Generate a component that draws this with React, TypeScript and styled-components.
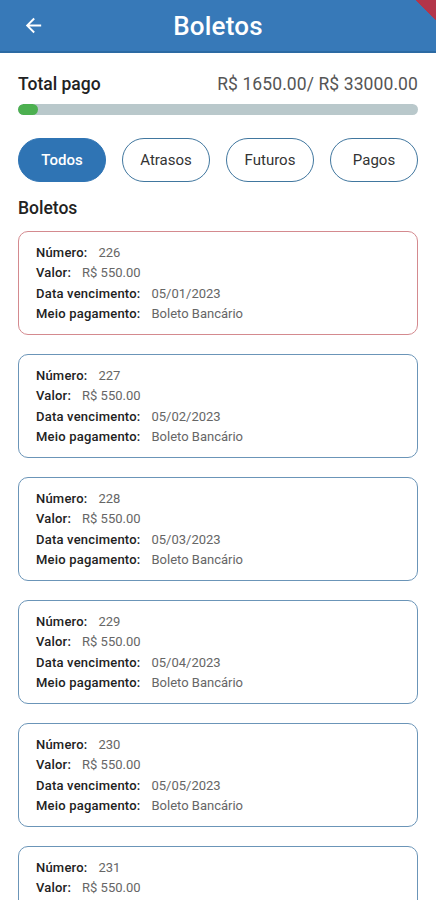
import styled, { createGlobalStyle } from "styled-components";

const GlobalStyle = createGlobalStyle`
    html, body {
        margin: 0;
        padding: 0;
        background: #ffffff;
        font-family: Roboto, "Noto Sans", sans-serif;
    }
    * {
        box-sizing: border-box;
    }
`;

const Screen = styled.div`
    width: 436px;
    height: 900px;
    overflow: hidden;
    position: relative;
    background: #ffffff;
`;

const AppBar = styled.header`
    height: 53px;
    background: #3779b8;
    border-bottom: 2px solid #2c6aa3;
    display: flex;
    align-items: center;
    justify-content: center;
    position: relative;
    color: #ffffff;
`;

const BackButton = styled.button`
    position: absolute;
    left: 20px;
    top: 12px;
    width: 26px;
    height: 26px;
    padding: 0;
    border: none;
    background: transparent;
    display: flex;
    align-items: center;
    justify-content: center;
`;

const AppTitle = styled.h1`
    margin: 0;
    font-size: 26px;
    font-weight: 500;
    letter-spacing: 0.2px;
`;

const DebugBanner = styled.div`
    position: absolute;
    top: 0;
    right: 0;
    width: 20px;
    height: 20px;
    background: linear-gradient(45deg, transparent 50%, #b3354a 50%);
`;

const Content = styled.main`
    padding: 19px 18px 0;
    display: flex;
    flex-direction: column;
`;

const TotalRow = styled.div`
    display: flex;
    justify-content: space-between;
    align-items: center;
    height: 24px;
`;

const TotalLabel = styled.span`
    font-size: 17.5px;
    font-weight: 500;
    color: #222222;
`;

const TotalValue = styled.span`
    font-size: 17.5px;
    letter-spacing: 0.1px;
    color: #555555;
`;

const ProgressTrack = styled.div`
    margin-top: 8px;
    height: 11px;
    border-radius: 6px;
    background: #b9c8cb;
    overflow: hidden;
`;

const ProgressFill = styled.div`
    height: 100%;
    border-radius: 6px;
    background: #4cb050;
`;

const FilterRow = styled.div`
    margin-top: 23px;
    display: grid;
    grid-template-columns: repeat(4, 1fr);
    gap: 16px;
`;

const FilterChip = styled.button<{ active: boolean }>`
    height: 44px;
    border-radius: 22px;
    border: 1px solid ${(props) => (props.active ? "#2f74b4" : "#41779f")};
    background: ${(props) => (props.active ? "#2f74b4" : "#ffffff")};
    color: ${(props) => (props.active ? "#ffffff" : "#333333")};
    font-family: Roboto, sans-serif;
    font-size: 15px;
    font-weight: ${(props) => (props.active ? 500 : 400)};
    padding: 0;
`;

const SectionTitle = styled.h2`
    margin: 14px 0 0;
    font-size: 17.5px;
    font-weight: 500;
    color: #222222;
    line-height: 24px;
`;

const CardList = styled.div`
    margin-top: 11px;
    display: flex;
    flex-direction: column;
    gap: 19px;
`;

const Card = styled.div<{ late: boolean }>`
    height: 104px;
    border: 1px solid ${(props) => (props.late ? "#d48a8f" : "#6b95b8")};
    border-radius: 10px;
    padding: 10px 17px;
    display: flex;
    flex-direction: column;
`;

const InfoLine = styled.div`
    height: 21px;
    display: flex;
    align-items: center;
    font-size: 13px;
`;

const InfoLabel = styled.span`
    font-weight: 500;
    letter-spacing: 0.2px;
    color: #222222;
    margin-right: 11px;
`;

const InfoValue = styled.span`
    color: #666666;
`;

const boletos = [
    { numero: 226, vencimento: "05/01/2023", late: true },
    { numero: 227, vencimento: "05/02/2023", late: false },
    { numero: 228, vencimento: "05/03/2023", late: false },
    { numero: 229, vencimento: "05/04/2023", late: false },
    { numero: 230, vencimento: "05/05/2023", late: false },
    { numero: 231, vencimento: "05/06/2023", late: false },
];

const filters = ["Todos", "Atrasos", "Futuros", "Pagos"];

function App() {
    const pago = 1650;
    const total = 33000;
    const percent = Math.max((pago / total) * 100, 5);

    return (
        <>
            <GlobalStyle />
            <Screen>
                <AppBar>
                    <BackButton aria-label="Voltar">
                        <svg width="23" height="23" viewBox="0 0 24 24">
                            <path d="M20 11H7.83l5.59-5.59L12 4l-8 8 8 8 1.41-1.41L7.83 13H20v-2z" fill="#ffffff" />
                        </svg>
                    </BackButton>
                    <AppTitle>Boletos</AppTitle>
                    <DebugBanner />
                </AppBar>

                <Content>
                    <TotalRow>
                        <TotalLabel>Total pago</TotalLabel>
                        <TotalValue>R$ 1650.00/ R$ 33000.00</TotalValue>
                    </TotalRow>
                    <ProgressTrack>
                        <ProgressFill style={{ width: `${percent}%` }} />
                    </ProgressTrack>

                    <FilterRow>
                        {filters.map((f, i) => (
                            <FilterChip key={f} active={i === 0}>{f}</FilterChip>
                        ))}
                    </FilterRow>

                    <SectionTitle>Boletos</SectionTitle>

                    <CardList>
                        {boletos.map((b) => (
                            <Card key={b.numero} late={b.late}>
                                <InfoLine>
                                    <InfoLabel>Número:</InfoLabel>
                                    <InfoValue>{b.numero}</InfoValue>
                                </InfoLine>
                                <InfoLine>
                                    <InfoLabel>Valor:</InfoLabel>
                                    <InfoValue>R$ 550.00</InfoValue>
                                </InfoLine>
                                <InfoLine>
                                    <InfoLabel>Data vencimento:</InfoLabel>
                                    <InfoValue>{b.vencimento}</InfoValue>
                                </InfoLine>
                                <InfoLine>
                                    <InfoLabel>Meio pagamento:</InfoLabel>
                                    <InfoValue>Boleto Bancário</InfoValue>
                                </InfoLine>
                            </Card>
                        ))}
                    </CardList>
                </Content>
            </Screen>
        </>
    );
}

export default App;
